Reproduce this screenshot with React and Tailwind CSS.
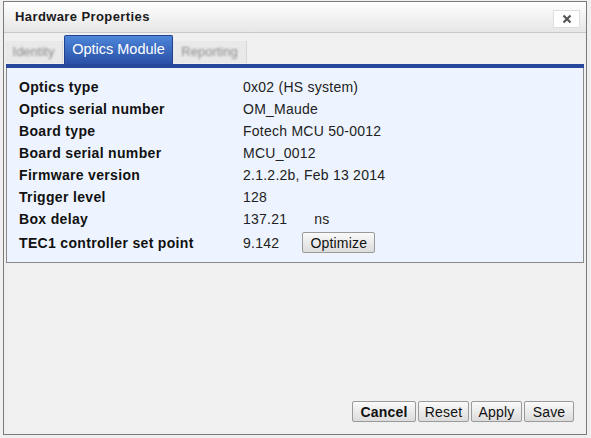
import React from 'react';

const rows = [
  ['Optics type', '0x02 (HS system)'],
  ['Optics serial number', 'OM_Maude'],
  ['Board type', 'Fotech MCU 50-0012'],
  ['Board serial number', 'MCU_0012'],
  ['Firmware version', '2.1.2.2b, Feb 13 2014'],
  ['Trigger level', '128'],
  ['Box delay', 'ns'],
  ['TEC1 controller set point', 'opt'],
];

function Btn({ children, bold, w }) {
  return (
    <button
      className={`h-[21px] ${w} border border-[#9a9a9a] rounded-[2px] bg-gradient-to-b from-[#fafafa] to-[#dcdcdc] text-[14px] tracking-[0.2px] text-[#111] leading-none ${bold ? 'font-bold' : ''}`}
    >
      {children}
    </button>
  );
}

export default function App() {
  return (
    <div
      className="w-[591px] h-[438px] bg-[#f0f0f0] pt-[1px] pl-[3px]"
      style={{ fontFamily: '"Liberation Sans", Arial, sans-serif' }}
    >
      <div className="w-[584px] h-[434px] border border-[#7a7a7a] bg-[#f0f0f0] flex flex-col">
        {/* Title bar */}
        <div className="h-[31px] shrink-0 flex items-center justify-between pl-[11px] pr-[6px] bg-gradient-to-b from-[#ffffff] to-[#e6e6e6] border-b border-[#c9c9c9]">
          <span className="text-[13px] tracking-[0.4px] font-bold text-[#1a1a1a]">Hardware Properties</span>
          <button className="w-[27px] h-[18px] mt-[3px] flex items-center justify-center bg-white border border-[#dedede] text-[#555]">
            <svg width="10" height="10" viewBox="0 0 10 10">
              <path d="M1.5 1.5 L8.5 8.5 M8.5 1.5 L1.5 8.5" stroke="#555" strokeWidth="2.2" />
            </svg>
          </button>
        </div>

        {/* Tabs */}
        <div className="flex items-end h-[31px] pl-[1px] pr-[1px] shrink-0">
          <div className="h-[22px] w-[58px] mb-[1px] flex items-center justify-center bg-[#e9e9e9] border-r border-[#d6d6d6]">
            <span className="text-[13px] text-[#8a8a8a] blur-[0.8px]">Identity</span>
          </div>
          <div className="h-[29px] w-[109px] ml-[1px] flex items-center justify-center rounded-t-[2px] bg-gradient-to-b from-[#4d86da] to-[#2a4fa6] border border-[#21418e] border-b-0">
            <span className="text-[14.5px] text-white">Optics Module</span>
          </div>
          <div className="h-[22px] w-[74px] mb-[1px] flex items-center justify-center bg-[#e9e9e9] border-r border-[#d6d6d6]">
            <span className="text-[13px] text-[#8a8a8a] blur-[0.8px]">Reporting</span>
          </div>
        </div>

        {/* Panel */}
        <div className="mx-[2px] border-t-[4px] border-[#28479b]">
          <div className="bg-[#edf4ff] border border-t-0 border-[#8a8a8a] pt-[8px] pb-[6px] px-[12px]">
            {rows.map(([label, value]) => (
              <div key={label} className={`flex items-center ${label.startsWith('TEC1') ? 'h-[26px]' : 'h-[22px]'}`}>
                <span className="w-[224px] text-[14px] tracking-[0.33px] font-bold text-[#111]">{label}</span>
                <span className="text-[#222] text-[14px] tracking-[0.25px] flex items-center">
                  {value === 'ns' ? (
                    <>
                      <span>137.21</span>
                      <span className="ml-[27px]">ns</span>
                    </>
                  ) : value === 'opt' ? (
                    <>
                      <span>9.142</span>
                      <span className="ml-[23px]">
                        <Btn w="w-[73px]">Optimize</Btn>
                      </span>
                    </>
                  ) : (
                    value
                  )}
                </span>
              </div>
            ))}
          </div>
        </div>

        <div className="flex-1" />

        {/* Footer buttons */}
        <div className="flex justify-end gap-[2px] pr-[12px] pb-[12px]">
          <Btn bold w="w-[64px]">Cancel</Btn>
          <Btn w="w-[51px]">Reset</Btn>
          <Btn w="w-[51px]">Apply</Btn>
          <Btn w="w-[50px]">Save</Btn>
        </div>
      </div>
    </div>
  );
}
